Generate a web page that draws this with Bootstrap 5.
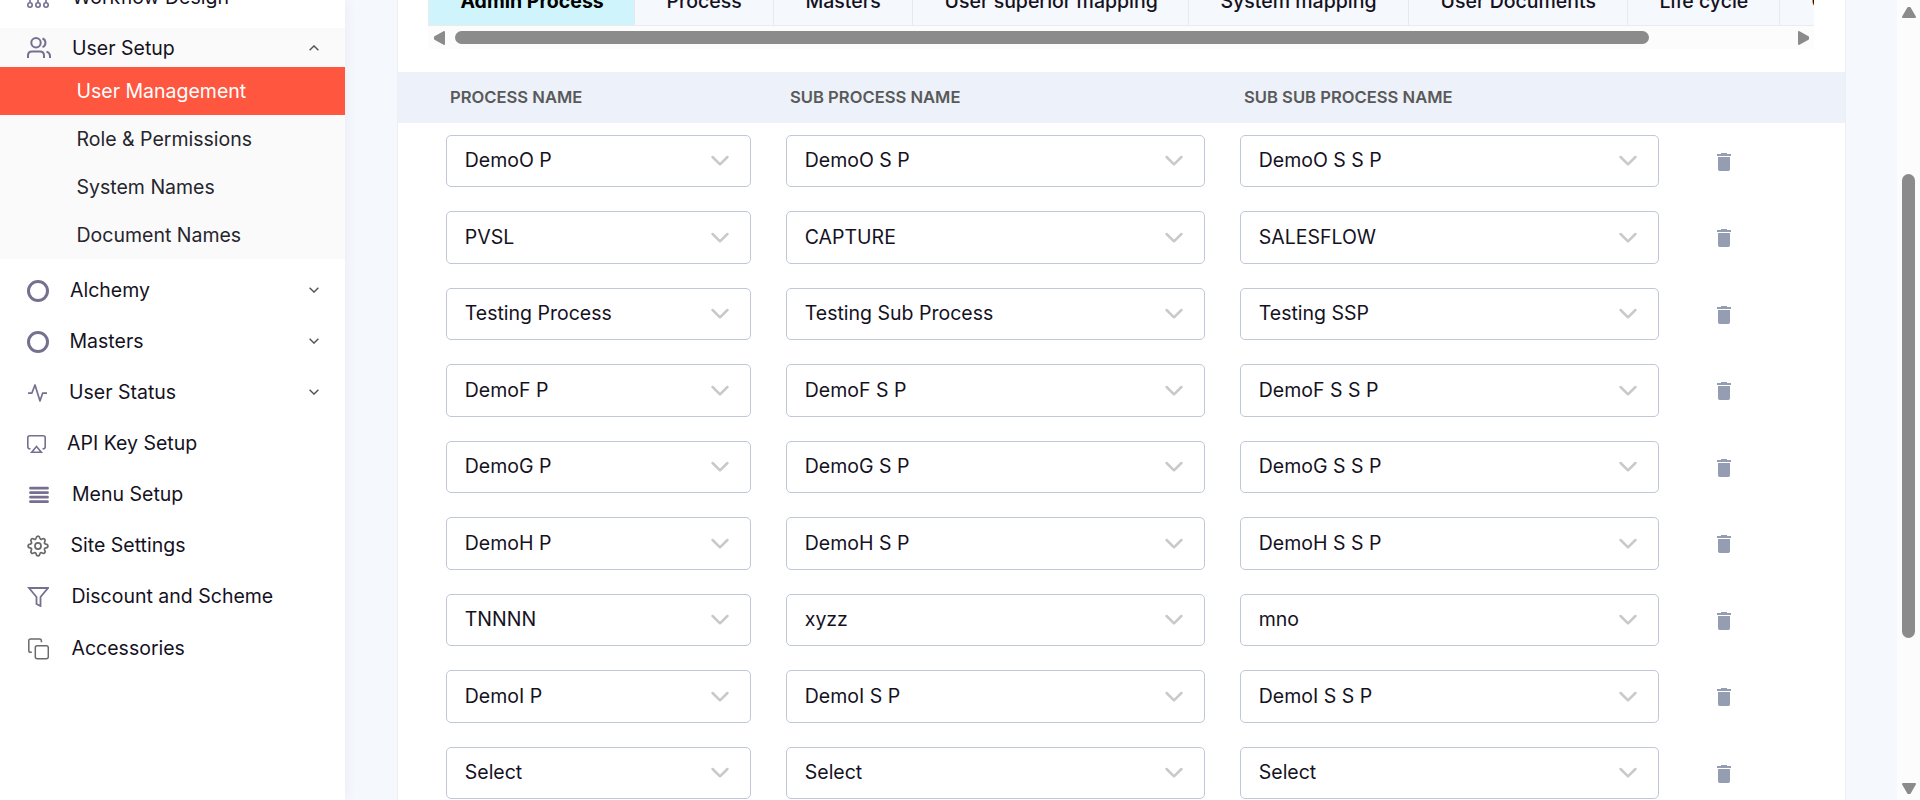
<!DOCTYPE html>
<html lang="en">
<head>
<meta charset="utf-8">
<meta name="viewport" content="width=device-width, initial-scale=1">
<title>User Management</title>
<link href="https://cdn.jsdelivr.net/npm/bootstrap@5.3.0/dist/css/bootstrap.min.css" rel="stylesheet">
<style>
  html, body { height: 800px; overflow: hidden; }
  body { font-family: Inter, sans-serif; font-optical-sizing: none; font-size: 19.5px; line-height: 24px; color: #15121f; background: #f5f8fd; }
  .app { height: 800px; }
  .sidebar { width: 345px; background: #fff; box-shadow: 0 0 12px rgba(60,70,110,.07); }
  .side-link { height: 51px; padding-left: 27px; padding-right: 26px; padding-bottom: 1.5px; color: #15121f; }
  .side-link svg.ic { fill: none; stroke: #766f8f; flex: none; margin-top: 2px; }
  .side-link svg.grey { stroke: #6a6a6a; }
  .chev { margin-left: auto; margin-top: 1px; flex: none; fill: none; stroke: #555; stroke-width: 1.4; }
  .open-group { background: #fafafa; margin-bottom: 6px; }
  .open-group > .side-link { height: 39px; padding-top: 1px; padding-bottom: 0; }
  .open-group > .side-link svg { margin-top: 0; }
  .sub-link { height: 48px; padding-left: 76.5px; padding-bottom: 1px; color: #26252e; }
  .sub-link.active { background: #ff5640; color: #fff; }
  .panel { width: 1449px; margin-left: 52px; background: #fff; border: solid #eceff6; border-width: 0 1px; }
  .tab-strip { height: 26px; margin: 0 31px 0 30px; overflow: hidden; border-bottom: 1px solid #e8ebf2; border-left: 1px solid #e8ebf2; background: #f5f8fd; font-weight: 500; }
  .tab-item { flex: none; height: 25px; border-right: 1px solid #e5e9f2; white-space: nowrap; padding-left: 31.5px; line-height: 24px; }
  .tab-item span { display: block; margin-top: -11px; }
  .tab-item.current { background: #cff4fc; font-weight: 700; color: #000; }
  .hbar { height: 23px; margin: 0 31px 0 30px; padding: 5px 5px 5px 6px; background: #fcfcfc; }
  .hbar svg, .vbar svg { fill: #8b8b8b; stroke: #8b8b8b; stroke-width: 2; stroke-linejoin: round; flex: none; }
  .hthumb { width: 1194px; height: 13px; border-radius: 7px; background: #8b8b8b; margin-left: 10px; }
  .vbar { width: 23px; background: #fcfcfc; }
  .vthumb { width: 13px; height: 464px; border-radius: 7px; background: #8b8b8b; margin-top: 156px; }
  .grid-line { display: grid; grid-template-columns: 305px 419px 419px 130px; column-gap: 35px; padding-left: 48px; }
  .grid-head { height: 51px; margin-top: 23px; padding-bottom: 2px; background: #ecf1fa; color: #595959; font-size: 16.6px; font-weight: 600; align-items: center; }
  .grid-head span { padding-left: 4px; }
  .grid-rows { padding-top: 11.9px; }
  .grid-row { height: 76.5px; }
  .pick { height: 52.5px; border: 1px solid #bfc7d8; border-radius: 5px; background: #fff; padding: 0 21px 0 17.75px; }
  .pick span { margin-top: -2px; }
  .pick svg { fill: none; stroke: #c9c9c9; stroke-width: 2.5; stroke-linecap: round; stroke-linejoin: round; }
  .trash { fill: #949db2; margin: 18px 0 0 23px; }
</style>
</head>
<body>
<svg width="0" height="0" class="position-absolute">
  <symbol id="down" viewBox="0 0 18 12"><path d="M1.600 2 9 9.300 16.400 2"/></symbol>
  <symbol id="bin" viewBox="0 0 14 18"><path d="M4 0h6v1h4v2H0V1h4zM1 4h12v12.300q0 1.700-1.700 1.700H2.700Q1 18 1 16.300z"/></symbol>
</svg>
<div class="app d-flex">
  <nav class="sidebar d-flex flex-column flex-shrink-0">
    <div class="overflow-hidden flex-shrink-0 d-flex align-items-end" style="height:28px">
      <a class="side-link w-100 d-flex align-items-center text-decoration-none" style="margin-bottom:5px"><svg class="ic" width="22" height="24" viewBox="0 0 22 24" stroke-width="1.600" style="margin-right:23px"><path d="M11 3v14M3 17v-7h16v7"/><circle cx="3" cy="19" r="2.200"/><circle cx="11" cy="19" r="2.200"/><circle cx="19" cy="19" r="2.200"/></svg>Workflow Design</a>
    </div>
    <div class="open-group">
      <a class="side-link d-flex align-items-center text-decoration-none"><svg class="ic" width="24" height="22" viewBox="0 0 24 22" stroke-width="2" style="margin-right:21px"><circle cx="9" cy="5.800" r="4.700"/><path d="M15.500 1.500a4.600 4.600 0 0 1 0 8.600M1 21v-2.500q0-4 4-4h8q4 0 4 4V21M19.500 14.600q3.500 1 3.500 4.400v2"/></svg>User Setup<svg class="chev" width="10" height="6" viewBox="0 0 10 6"><path d="M.6 5.300 5 .9l4.400 4.400"/></svg></a>
      <a class="sub-link active d-flex align-items-center text-decoration-none">User Management</a>
      <a class="sub-link d-flex align-items-center text-decoration-none">Role &amp; Permissions</a>
      <a class="sub-link d-flex align-items-center text-decoration-none">System Names</a>
      <a class="sub-link d-flex align-items-center text-decoration-none">Document Names</a>
    </div>
    <a class="side-link d-flex align-items-center text-decoration-none"><svg class="ic" width="22" height="22" stroke-width="3" style="margin-right:21px"><circle cx="11" cy="11" r="9.500"/></svg>Alchemy<svg class="chev" width="10" height="6" viewBox="0 0 10 6"><path d="M.6.700 5 5.100 9.400.700"/></svg></a>
    <a class="side-link d-flex align-items-center text-decoration-none"><svg class="ic" width="22" height="22" stroke-width="3" style="margin-right:20.500px"><circle cx="11" cy="11" r="9.500"/></svg>Masters<svg class="chev" width="10" height="6" viewBox="0 0 10 6"><path d="M.6.700 5 5.100 9.400.700"/></svg></a>
    <a class="side-link d-flex align-items-center text-decoration-none"><svg class="ic" width="20" height="18" viewBox="0 0 20 18" stroke-width="1.700" stroke-linejoin="round" style="margin-right:22px"><path d="M1 9.200h3.800L8 1l5 16 2.600-7.800H20"/></svg>User Status<svg class="chev" width="10" height="6" viewBox="0 0 10 6"><path d="M.6.700 5 5.100 9.400.700"/></svg></a>
    <a class="side-link d-flex align-items-center text-decoration-none"><svg class="ic" width="19" height="18" viewBox="0 0 19 18" stroke-width="1.600" style="margin-right:21px"><path d="M3.500 13.700h-.7Q.8 13.700.8 11.700V2.800q0-2 2-2h13.400q2 0 2 2v8.900q0 2-2 2h-.7M9.500 11.500l4.800 5.700H4.700z"/></svg>API Key Setup</a>
    <a class="side-link d-flex align-items-center text-decoration-none"><svg class="ic" width="22" height="18" viewBox="0 0 22 18" stroke-width="2.800" stroke-linecap="round" style="margin-right:23px"><path d="M3.500 2.200h17M3.500 6.700h17M3.500 11.200h17M3.500 15.700h17"/></svg>Menu Setup</a>
    <a class="side-link d-flex align-items-center text-decoration-none"><svg class="ic grey" width="22" height="22" viewBox="0 0 24 24" stroke-width="1.900" stroke-linejoin="round" style="margin-right:21.500px"><circle cx="12" cy="12" r="3.300"/><path d="M10 3.200q.3-2 2-2t2 2q.4 2 2.300 1.300 1.700-1.200 2.900 0t.1 2.900q-1 1.900 1.300 2.500 2.200.3 2.200 2.100t-2.200 2.100q-2.300.6-1.300 2.500 1.100 1.700-.1 2.900t-2.900 0q-1.900-.7-2.300 1.300-.3 2-2 2t-2-2q-.4-2-2.300-1.300-1.700 1.200-2.900 0t-.1-2.900q1-1.900-1.300-2.500-2.200-.3-2.200-2.100t2.200-2.100q2.300-.6 1.300-2.500-1.100-1.700.1-2.900t2.900 0Q9.600 5.200 10 3.200z"/></svg>Site Settings</a>
    <a class="side-link d-flex align-items-center text-decoration-none"><svg class="ic" width="22" height="20" viewBox="0 0 22 20" stroke-width="1.800" style="margin-right:22.500px"><path d="M2 1h19l-7.500 9v9l-4-2v-7z"/></svg>Discount and Scheme</a>
    <a class="side-link d-flex align-items-center text-decoration-none" style="height:53px"><svg class="ic grey" width="22" height="22" viewBox="0 0 22 22" stroke-width="1.500" style="margin-right:22.500px"><rect x="8.300" y="7.800" width="13" height="13" rx="2"/><path d="M4.800 14.200H3.600q-1.800 0-1.800-1.800V2.800Q1.800 1 3.600 1h9q1.800 0 1.800 1.800v1.500"/></svg>Accessories</a>
  </nav>

  <main class="panel flex-shrink-0">
    <div class="tab-strip d-flex">
      <div class="tab-item current" style="width:206px"><span>Admin Process</span></div>
      <div class="tab-item" style="width:139px"><span>Process</span></div>
      <div class="tab-item" style="width:139px"><span>Masters</span></div>
      <div class="tab-item" style="width:276px"><span>User superior mapping</span></div>
      <div class="tab-item" style="width:220px"><span>System mapping</span></div>
      <div class="tab-item" style="width:219px"><span>User Documents</span></div>
      <div class="tab-item" style="width:152px"><span>Life cycle</span></div>
      <div class="tab-item" style="width:180px"><span>Organization</span></div>
    </div>
    <div class="hbar d-flex align-items-center">
      <svg width="11" height="14"><path d="M10 1v12L1 7.800V6.200z"/></svg>
      <div class="hthumb"></div>
      <svg class="ms-auto" width="11" height="14"><path d="M1 1v12l9-5.200V6.200z"/></svg>
    </div>
    <div class="grid-line grid-head"><span>PROCESS NAME</span><span>SUB PROCESS NAME</span><span>SUB SUB PROCESS NAME</span></div>
    <div class="grid-rows" id="rows"></div>
  </main>

  <div class="vbar ms-auto d-flex flex-column align-items-center">
    <svg width="14" height="12" style="margin-top:6px"><path d="M1 11h12L7.800 2H6.200z"/></svg>
    <div class="vthumb"></div>
    <svg class="mt-auto" width="14" height="12" style="margin-bottom:5px"><path d="M1 1h12l-5.200 9H6.200z"/></svg>
  </div>
</div>
<script>
  const data = [
    ['DemoO P', 'DemoO S P', 'DemoO S S P'], ['PVSL', 'CAPTURE', 'SALESFLOW'],
    ['Testing Process', 'Testing Sub Process', 'Testing SSP'], ['DemoF P', 'DemoF S P', 'DemoF S S P'],
    ['DemoG P', 'DemoG S P', 'DemoG S S P'], ['DemoH P', 'DemoH S P', 'DemoH S S P'],
    ['TNNNN', 'xyzz', 'mno'], ['DemoI P', 'DemoI S P', 'DemoI S S P'], ['Select', 'Select', 'Select']
  ];
  document.getElementById('rows').innerHTML = data.map(r =>
    '<div class="grid-line grid-row">' + r.map(t =>
      `<div class="pick d-flex align-items-center justify-content-between"><span>${t}</span><svg width="18" height="12"><use href="#down"/></svg></div>`).join('') +
    '<div><svg class="trash d-block" width="14" height="18"><use href="#bin"/></svg></div></div>').join('');
</script>
<script src="https://cdn.jsdelivr.net/npm/bootstrap@5.3.0/dist/js/bootstrap.bundle.min.js"></script>
</body>
</html>
